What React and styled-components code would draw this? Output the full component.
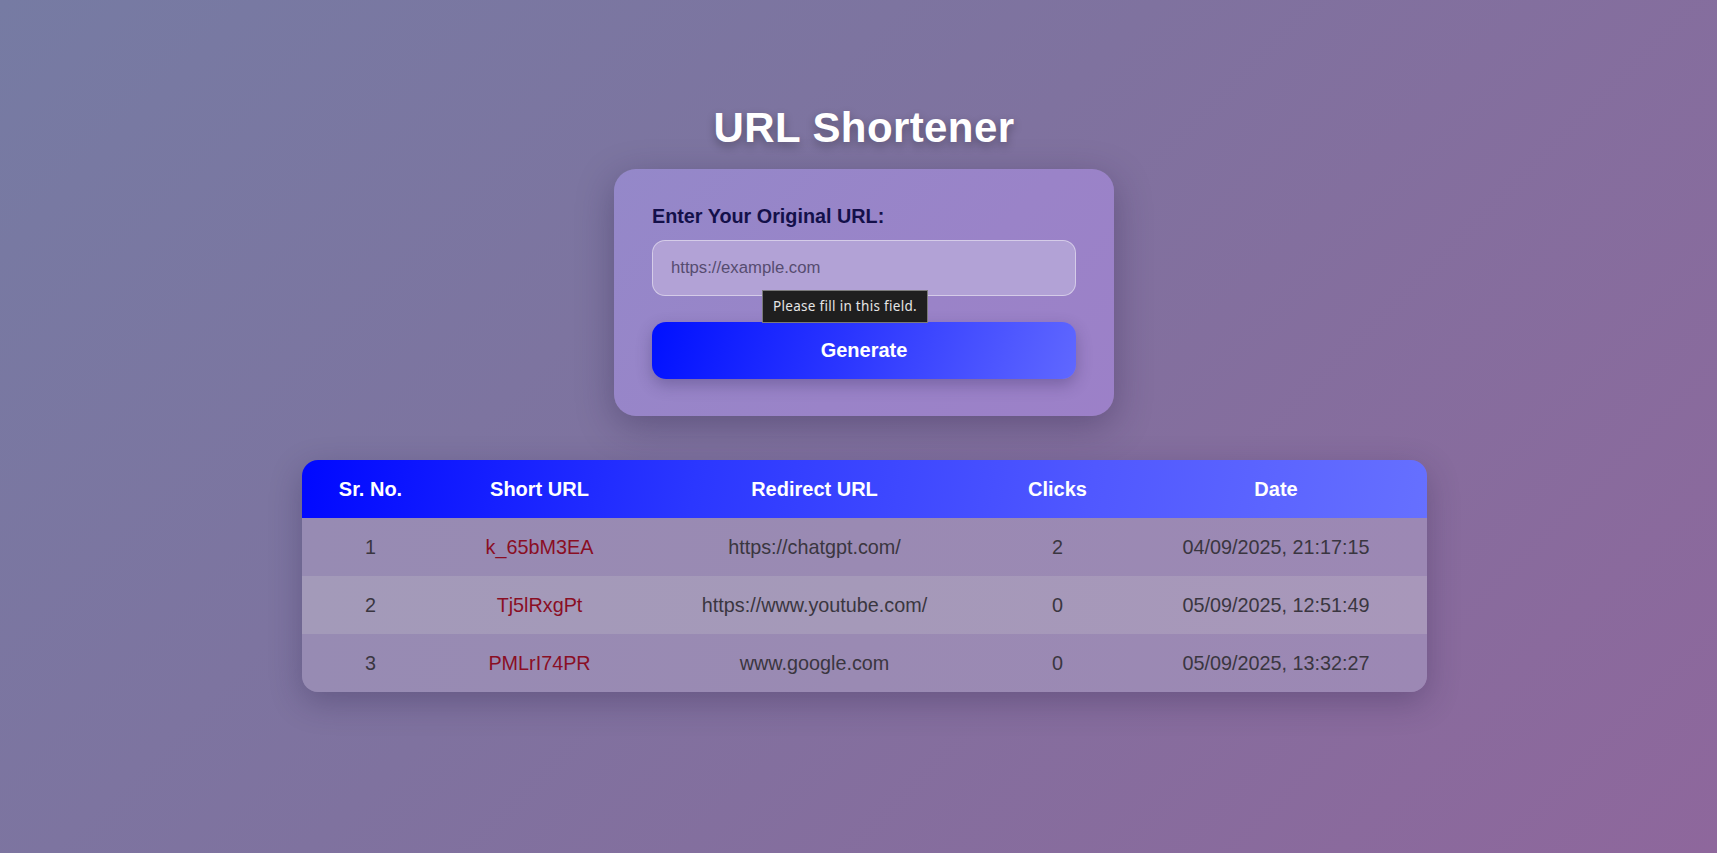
import React from 'react';
import styled, { createGlobalStyle } from 'styled-components';

const GlobalStyle = createGlobalStyle`
  * {
    box-sizing: border-box;
  }

  body {
    margin: 0;
    font-family: 'Liberation Sans', Arial, sans-serif;
  }
`;

const Page = styled.div`
  min-height: 100vh;
  padding: 104px 0 60px 11px;
  display: flex;
  flex-direction: column;
  align-items: center;
  background: linear-gradient(135deg, #767ba3 0%, #7f729f 45%, #8e679c 100%);
`;

const Title = styled.h1`
  margin: 0 0 17px;
  font-size: 42px;
  font-weight: 700;
  color: #ffffff;
  letter-spacing: 0.4px;
  text-shadow: 0 4px 10px rgba(0, 0, 0, 0.3);
`;

const FormCard = styled.form`
  width: 500px;
  padding: 36px 38px 37px;
  border-radius: 22px;
  background: linear-gradient(135deg, #9488c9 0%, #9a83c8 60%, #9c80c8 100%);
  box-shadow: 0 10px 36px rgba(40, 30, 70, 0.35);
  display: flex;
  flex-direction: column;
`;

const Label = styled.label`
  font-size: 19.8px;
  font-weight: 700;
  color: #14104a;
  margin-bottom: 12px;
`;

const InputWrap = styled.div`
  position: relative;
  margin-bottom: 26px;
`;

const UrlInput = styled.input`
  width: 100%;
  height: 56px;
  padding: 0 18px;
  border-radius: 13px;
  border: 1px solid rgba(255, 255, 255, 0.45);
  background: #b2a2d6;
  font-family: 'Liberation Sans', Arial, sans-serif;
  font-size: 16.7px;
  color: #2a2440;
  outline: none;

  &::placeholder {
    color: #564c70;
  }
`;

const Tooltip = styled.div`
  position: absolute;
  left: 110px;
  top: 50px;
  padding: 6px 10px 7px;
  background: #1f1f1f;
  border: 1px solid #7a7a7a;
  color: #e6e6e6;
  font-family: 'Noto Sans', 'Open Sans', sans-serif;
  font-size: 13.5px;
  letter-spacing: 0.3px;
  white-space: nowrap;
  z-index: 2;
`;

const GenerateButton = styled.button`
  height: 57px;
  border: none;
  border-radius: 14px;
  background: linear-gradient(110deg, #0010ff 0%, #2a35ff 45%, #6068ff 100%);
  color: #ffffff;
  font-family: 'Liberation Sans', Arial, sans-serif;
  font-size: 20px;
  font-weight: 700;
  cursor: pointer;
  box-shadow: 0 6px 16px rgba(40, 30, 80, 0.3);
`;

const TableCard = styled.div`
  width: 1125px;
  margin-top: 44px;
  border-radius: 16px;
  overflow: hidden;
  box-shadow: 0 10px 32px rgba(40, 30, 70, 0.3);
`;

const Table = styled.table`
  width: 100%;
  border-collapse: collapse;
  table-layout: fixed;
`;

const HeadRow = styled.tr`
  background: linear-gradient(100deg, #0008ff 0%, #2b37ff 35%, #5058ff 70%, #6670ff 100%);
`;

const HeadCell = styled.th`
  height: 58px;
  padding: 0;
  font-size: 20px;
  font-weight: 700;
  color: #ffffff;
  text-align: center;
`;

const BodyRow = styled.tr`
  background: ${(p) =>
    p.$alt
      ? 'linear-gradient(90deg, #a39ab9 0%, #a599b9 50%, #a897ba 100%)'
      : 'linear-gradient(90deg, #978bb3 0%, #9a8ab3 50%, #9c88b4 100%)'};
`;

const Cell = styled.td`
  height: 58px;
  padding: 0;
  font-size: 19.8px;
  color: ${(p) => (p.$link ? '#8a0e24' : '#3a3640')};
  text-align: center;
`;

const columns = [
  { title: 'Sr. No.', width: 138 },
  { title: 'Short URL', width: 200 },
  { title: 'Redirect URL', width: 350 },
  { title: 'Clicks', width: 136 },
  { title: 'Date', width: 301 },
];

const urls = [
  { id: 1, short: 'k_65bM3EA', redirect: 'https://chatgpt.com/', clicks: 2, date: '04/09/2025, 21:17:15' },
  { id: 2, short: 'Tj5lRxgPt', redirect: 'https://www.youtube.com/', clicks: 0, date: '05/09/2025, 12:51:49' },
  { id: 3, short: 'PMLrI74PR', redirect: 'www.google.com', clicks: 0, date: '05/09/2025, 13:32:27' },
];

export default function App() {
  return (
    <>
      <GlobalStyle />
      <Page>
        <Title>URL Shortener</Title>

        <FormCard onSubmit={(e) => e.preventDefault()}>
          <Label htmlFor="original-url">Enter Your Original URL:</Label>
          <InputWrap>
            <UrlInput id="original-url" type="url" placeholder="https://example.com" />
            <Tooltip>Please fill in this field.</Tooltip>
          </InputWrap>
          <GenerateButton type="submit">Generate</GenerateButton>
        </FormCard>

        <TableCard>
          <Table>
            <colgroup>
              {columns.map((col) => (
                <col key={col.title} style={{ width: col.width }} />
              ))}
            </colgroup>
            <thead>
              <HeadRow>
                {columns.map((col) => (
                  <HeadCell key={col.title}>{col.title}</HeadCell>
                ))}
              </HeadRow>
            </thead>
            <tbody>
              {urls.map((u, i) => (
                <BodyRow key={u.id} $alt={i % 2 === 1}>
                  <Cell>{u.id}</Cell>
                  <Cell $link>{u.short}</Cell>
                  <Cell>{u.redirect}</Cell>
                  <Cell>{u.clicks}</Cell>
                  <Cell>{u.date}</Cell>
                </BodyRow>
              ))}
            </tbody>
          </Table>
        </TableCard>
      </Page>
    </>
  );
}
